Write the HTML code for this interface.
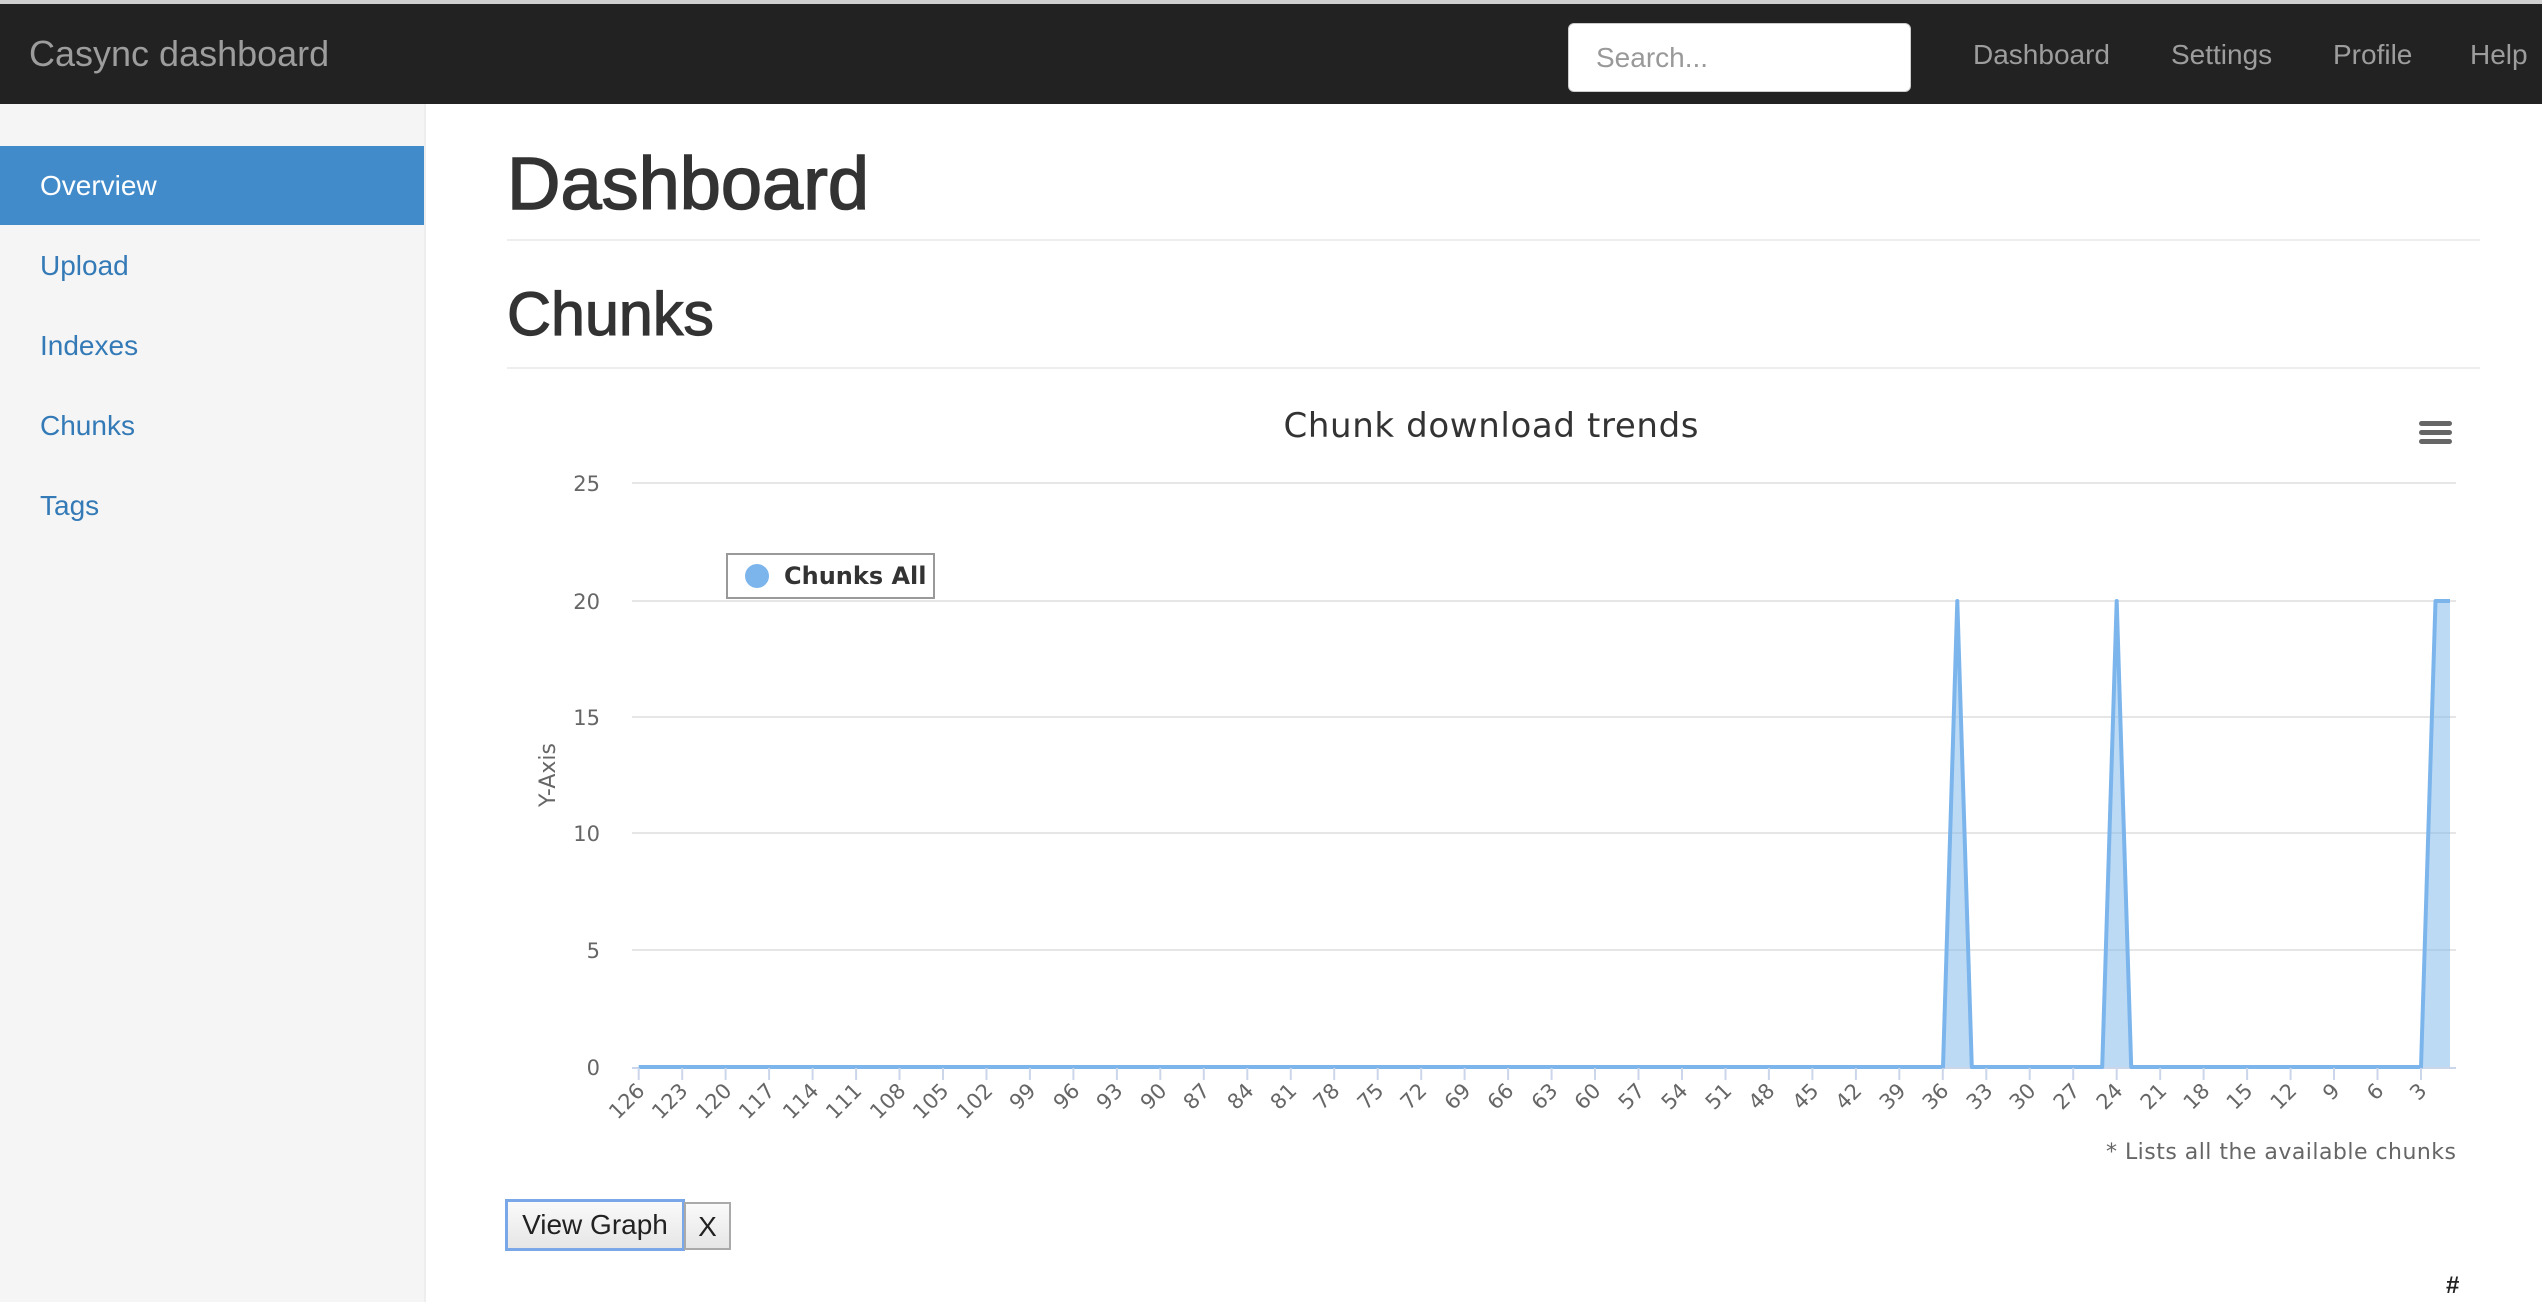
<!DOCTYPE html>
<html><head><meta charset="utf-8"><style>
*{margin:0;padding:0;box-sizing:border-box}
body{width:2542px;height:1302px;position:relative;background:#fff;font-family:"Liberation Sans",Arial,sans-serif;overflow:hidden}
.top{position:absolute;left:0;top:0;width:2542px;height:4px;background:#d0d0d0}
.nav{position:absolute;left:0;top:4px;width:2542px;height:100px;background:#222}
.brand{position:absolute;left:29px;top:30px;font-size:36px;color:#9d9d9d;line-height:40px}
.search{position:absolute;left:1568px;top:19px;width:343px;height:69px;background:#fff;border-radius:6px;border:1px solid #ccc;font-size:28px;color:#999;padding-left:27px;line-height:67px}
.nl{position:absolute;top:34px;font-size:28px;color:#9d9d9d;line-height:34px}
.side{position:absolute;left:0;top:104px;width:426px;height:1198px;background:#f5f5f5;border-right:2px solid #eee}
.act{position:absolute;left:0;top:146px;width:424px;height:79px;background:#428bca}
.si{position:absolute;left:40px;font-size:28px;color:#337ab7;line-height:34px}
h1{position:absolute;left:507px;top:139px;font-size:74px;font-weight:normal;color:#333;line-height:90px;-webkit-text-stroke:1.5px #333}
h2{position:absolute;left:507px;top:276px;font-size:61px;font-weight:normal;color:#333;line-height:76px;-webkit-text-stroke:1.2px #333}
.hr{position:absolute;left:507px;width:1973px;height:2px;background:#eee}
.btn{position:absolute;top:1200px;height:50px;background:linear-gradient(#fafafa,#e6e6e6);border:2px solid #aaa;font-size:28px;color:#222;text-align:center;line-height:46px}
</style></head><body>
<div class="top"></div>
<div class="nav">
<div class="brand">Casync dashboard</div>
<div class="search">Search...</div>
<div class="nl" style="left:1973px">Dashboard</div>
<div class="nl" style="left:2171px">Settings</div>
<div class="nl" style="left:2333px">Profile</div>
<div class="nl" style="left:2470px">Help</div>
</div>
<div class="side"></div>
<div class="act"></div>
<div class="si" style="top:169px;color:#fff">Overview</div>
<div class="si" style="top:249px">Upload</div>
<div class="si" style="top:329px">Indexes</div>
<div class="si" style="top:409px">Chunks</div>
<div class="si" style="top:489px">Tags</div>
<h1>Dashboard</h1>
<div class="hr" style="top:239px"></div>
<h2>Chunks</h2>
<div class="hr" style="top:367px"></div>
<svg style="position:absolute;left:0;top:0" width="2542" height="1302" font-family="'DejaVu Sans',sans-serif">
<text x="1491" y="437" text-anchor="middle" font-size="34" fill="#333" textLength="415">Chunk download trends</text>
<g fill="#666"><rect x="2419" y="421" width="33" height="5" rx="2.5"/><rect x="2419" y="430" width="33" height="5" rx="2.5"/><rect x="2419" y="439" width="33" height="5" rx="2.5"/></g>
<g stroke="#e6e6e6" stroke-width="2">
<line x1="632" y1="483" x2="2456" y2="483"/><line x1="632" y1="601" x2="2456" y2="601"/><line x1="632" y1="717" x2="2456" y2="717"/><line x1="632" y1="833" x2="2456" y2="833"/><line x1="632" y1="950" x2="2456" y2="950"/></g>
<line x1="632" y1="1068" x2="2456" y2="1068" stroke="#ccd6eb" stroke-width="2"/>
<g font-size="21" fill="#666" text-anchor="end">
<text x="600" y="491">25</text><text x="600" y="609">20</text><text x="600" y="725">15</text><text x="600" y="841">10</text><text x="600" y="958">5</text><text x="600" y="1075">0</text></g>
<text transform="translate(555,775) rotate(-90)" text-anchor="middle" font-size="22" fill="#666">Y-Axis</text>
<path d="M638.7,1067 L1943,1067 L1957.3,601 L1971.8,1067 L2102.2,1067 L2116.7,601 L2131.2,1067 L2421,1067 L2435.5,601 L2450,601 L2450,1067 Z" fill="#7cb5ec" fill-opacity="0.5"/>
<path d="M638.7,1067 L1943,1067 L1957.3,601 L1971.8,1067 L2102.2,1067 L2116.7,601 L2131.2,1067 L2421,1067 L2435.5,601 L2450,601" fill="none" stroke="#7cb5ec" stroke-width="4" stroke-linejoin="round"/>
<g stroke="#ccd6eb" stroke-width="2">
<path d="M638.7,1068v12M682.2,1068v12M725.6,1068v12M769.1,1068v12M812.6,1068v12M856.1,1068v12M899.5,1068v12M943,1068v12M986.5,1068v12M1029.9,1068v12M1073.4,1068v12M1116.9,1068v12M1160.3,1068v12M1203.8,1068v12M1247.3,1068v12M1290.8,1068v12M1334.2,1068v12M1377.7,1068v12M1421.2,1068v12M1464.6,1068v12M1508.1,1068v12M1551.6,1068v12M1595,1068v12M1638.5,1068v12M1682,1068v12M1725.5,1068v12M1768.9,1068v12M1812.4,1068v12M1855.9,1068v12M1899.3,1068v12M1942.8,1068v12M1986.3,1068v12M2029.7,1068v12M2073.2,1068v12M2116.7,1068v12M2160.2,1068v12M2203.6,1068v12M2247.1,1068v12M2290.6,1068v12M2334,1068v12M2377.5,1068v12M2421,1068v12"/></g>
<g font-size="21" fill="#666" text-anchor="end">
<text transform="translate(646,1092) rotate(-45)">126</text>
<text transform="translate(689,1092) rotate(-45)">123</text>
<text transform="translate(733,1092) rotate(-45)">120</text>
<text transform="translate(776,1092) rotate(-45)">117</text>
<text transform="translate(820,1092) rotate(-45)">114</text>
<text transform="translate(863,1092) rotate(-45)">111</text>
<text transform="translate(907,1092) rotate(-45)">108</text>
<text transform="translate(950,1092) rotate(-45)">105</text>
<text transform="translate(994,1092) rotate(-45)">102</text>
<text transform="translate(1037,1092) rotate(-45)">99</text>
<text transform="translate(1081,1092) rotate(-45)">96</text>
<text transform="translate(1124,1092) rotate(-45)">93</text>
<text transform="translate(1168,1092) rotate(-45)">90</text>
<text transform="translate(1211,1092) rotate(-45)">87</text>
<text transform="translate(1255,1092) rotate(-45)">84</text>
<text transform="translate(1298,1092) rotate(-45)">81</text>
<text transform="translate(1341,1092) rotate(-45)">78</text>
<text transform="translate(1385,1092) rotate(-45)">75</text>
<text transform="translate(1428,1092) rotate(-45)">72</text>
<text transform="translate(1472,1092) rotate(-45)">69</text>
<text transform="translate(1515,1092) rotate(-45)">66</text>
<text transform="translate(1559,1092) rotate(-45)">63</text>
<text transform="translate(1602,1092) rotate(-45)">60</text>
<text transform="translate(1646,1092) rotate(-45)">57</text>
<text transform="translate(1689,1092) rotate(-45)">54</text>
<text transform="translate(1733,1092) rotate(-45)">51</text>
<text transform="translate(1776,1092) rotate(-45)">48</text>
<text transform="translate(1820,1092) rotate(-45)">45</text>
<text transform="translate(1863,1092) rotate(-45)">42</text>
<text transform="translate(1907,1092) rotate(-45)">39</text>
<text transform="translate(1950,1092) rotate(-45)">36</text>
<text transform="translate(1994,1092) rotate(-45)">33</text>
<text transform="translate(2037,1092) rotate(-45)">30</text>
<text transform="translate(2081,1092) rotate(-45)">27</text>
<text transform="translate(2124,1092) rotate(-45)">24</text>
<text transform="translate(2168,1092) rotate(-45)">21</text>
<text transform="translate(2211,1092) rotate(-45)">18</text>
<text transform="translate(2254,1092) rotate(-45)">15</text>
<text transform="translate(2298,1092) rotate(-45)">12</text>
<text transform="translate(2341,1092) rotate(-45)">9</text>
<text transform="translate(2385,1092) rotate(-45)">6</text>
<text transform="translate(2428,1092) rotate(-45)">3</text>
</g>
<rect x="727" y="554" width="207" height="44" fill="#fff" stroke="#999" stroke-width="2"/>
<circle cx="757" cy="576" r="12" fill="#7cb5ec"/>
<text x="784" y="584" font-size="24" font-weight="bold" fill="#333">Chunks All</text>
<text x="2106" y="1159" font-size="22" fill="#666" textLength="350">* Lists all the available chunks</text>
</svg>
<div class="btn" style="left:506px;width:178px;border-color:#7aa7e8;box-shadow:0 0 0 1px #7aa7e8">View Graph</div>
<div class="btn" style="left:684px;width:47px;top:1202px;height:48px">X</div>
<div style="position:absolute;left:2446px;top:1272px;font-size:24px;font-weight:bold;color:#222">#</div>
</body></html>
